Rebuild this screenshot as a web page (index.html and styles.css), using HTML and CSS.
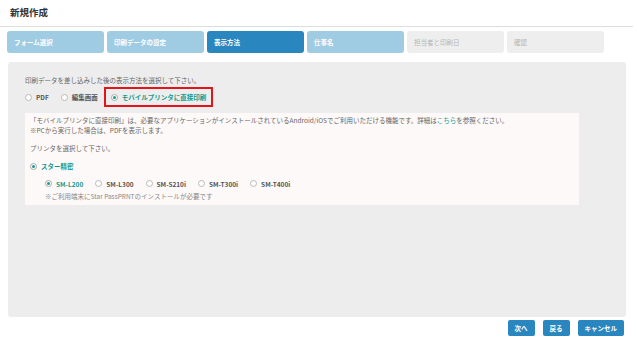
FILE: index.html
```html
<!DOCTYPE html>
<html>
<head>
    <meta charset="utf-8">
    <title>新規作成</title>
    <link rel="stylesheet" href="styles.css">
</head>
<body>
    <!-- Header -->
    <div class="header">
        <h1 class="title">新規作成</h1>
    </div>

    <!-- Wizard steps -->
    <div class="steps">
        <div class="step done">フォーム選択</div>
        <div class="step done">印刷データの設定</div>
        <div class="step active">表示方法</div>
        <div class="step done">仕事名</div>
        <div class="step todo">担当者と印刷日</div>
        <div class="step todo">確認</div>
    </div>

    <!-- Display method panel -->
    <div class="panel">
        <p class="lead">印刷データを差し込みした後の表示方法を選択して下さい。</p>

        <div class="mode-row">
            <label class="choice"><span class="radio"></span>PDF</label>
            <label class="choice"><span class="radio"></span>編集画面</label>
            <label class="choice selected highlight"><span class="radio on"></span>モバイルプリンタに直接印刷</label>
        </div>

        <div class="notice">
            <p class="line">「モバイルプリンタに直接印刷」は、必要なアプリケーションがインストールされているAndroid/iOSでご利用いただける機能です。詳細は<a class="link">こちら</a>を参照ください。</p>
            <p class="line">※PCから実行した場合は、PDFを表示します。</p>
            <p class="line gap">プリンタを選択して下さい。</p>

            <label class="choice selected maker"><span class="radio on"></span>スター精密</label>

            <div class="model-row">
                <label class="choice selected"><span class="radio on"></span>SM-L200</label>
                <label class="choice"><span class="radio"></span>SM-L300</label>
                <label class="choice"><span class="radio"></span>SM-S210i</label>
                <label class="choice"><span class="radio"></span>SM-T300i</label>
                <label class="choice"><span class="radio"></span>SM-T400i</label>
            </div>
            <p class="note">※ご利用端末にStar PassPRNTのインストールが必要です</p>
        </div>
    </div>

    <!-- Actions -->
    <div class="actions">
        <button class="btn">次へ</button>
        <button class="btn">戻る</button>
        <button class="btn">キャンセル</button>
    </div>
</body>
</html>
```

FILE: styles.css
```css
body {
    margin: 0;
    font-family: "Noto Sans CJK JP", "Noto Sans", sans-serif;
    font-size: 6.5px;
    color: #666666;
    background: #ffffff;
}

p {
    margin: 0;
}

/* Header */
.header {
    height: 27px;
    box-sizing: border-box;
    padding: 0 0 2px 10px;
    border-bottom: 1px solid #dddddd;
    margin-right: 4px;
    display: flex;
    align-items: center;
}

.title {
    margin: 0;
    font-size: 9.5px;
    font-weight: bold;
    color: #333333;
}

/* Wizard steps */
.steps {
    display: flex;
    gap: 3px;
    padding: 4px 7px 0;
}

.step {
    width: 97px;
    height: 22px;
    border-radius: 3px;
    box-sizing: border-box;
    padding-left: 7px;
    display: flex;
    align-items: center;
    font-weight: bold;
    color: #ffffff;
}

.step.done {
    background-color: #9fcbe3;
}

.step.active {
    background-color: #2a86be;
}

.step.todo {
    background-color: #eeeeee;
    color: #b5b5b5;
    font-weight: normal;
}

/* Panel */
.panel {
    margin: 9px 11px 0 8px;
    height: 255px;
    box-sizing: border-box;
    padding: 13px 17px 0;
    background-color: #ededed;
    border-radius: 3px;
}

.lead {
    line-height: 10px;
}

.mode-row {
    display: flex;
    align-items: center;
    gap: 12px;
    margin-top: 2px;
}

.choice {
    display: inline-flex;
    align-items: center;
    gap: 4px;
    font-weight: bold;
    color: #555555;
    line-height: 10px;
}

.choice.selected {
    color: #169a8b;
}

.highlight {
    border: 2px solid #e3141c;
    padding: 3px 5px;
    margin-left: -6px;
}

.radio {
    width: 7px;
    height: 7px;
    box-sizing: border-box;
    border: 1px solid #b9b9b9;
    border-radius: 50%;
    background: #ffffff;
    position: relative;
}

.radio.on {
    border-color: #a9a9a9;
}

.radio.on::after {
    content: "";
    position: absolute;
    left: 1px;
    top: 1px;
    width: 3px;
    height: 3px;
    border-radius: 50%;
    background: #169a8b;
}

/* Notice box */
.notice {
    width: 554px;
    height: 92px;
    box-sizing: border-box;
    margin-top: 6px;
    padding: 2px 5px 0;
    background-color: #fdf9f8;
}

.line {
    line-height: 10px;
}

.line.gap {
    margin-top: 8px;
}

.link {
    color: #169a8b;
}

.maker {
    margin-top: 8px;
}

.model-row {
    display: flex;
    align-items: center;
    gap: 12px;
    margin-top: 7px;
    padding-left: 15px;
}

.note {
    padding-left: 15px;
    margin-top: 2px;
    line-height: 10px;
    color: #888888;
}

/* Buttons */
.actions {
    display: flex;
    justify-content: flex-end;
    gap: 8px;
    margin: 3px 13px 0 0;
}

.btn {
    height: 16px;
    padding: 0 7px;
    border: none;
    border-radius: 2px;
    background-color: #2a86be;
    color: #ffffff;
    font-family: inherit;
    font-size: 6.5px;
    font-weight: bold;
    cursor: pointer;
}
```
